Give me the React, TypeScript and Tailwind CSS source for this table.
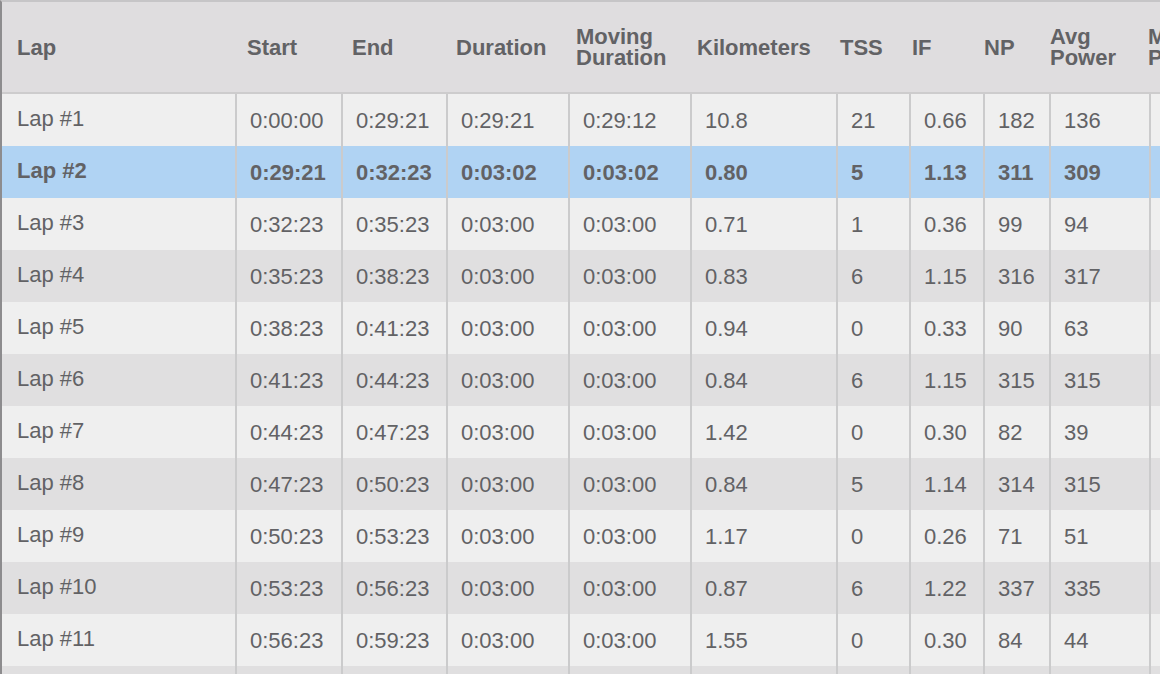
import React from "react";

const headers = [
  { label: "Lap", w: "w-[245px] pl-[15px]" },
  { label: "Start", w: "w-[105px]" },
  { label: "End", w: "w-[104px]" },
  { label: "Duration", w: "w-[120px]" },
  { label: "Moving Duration", w: "w-[121px]" },
  { label: "Kilometers", w: "w-[143px]" },
  { label: "TSS", w: "w-[72px]" },
  { label: "IF", w: "w-[72px]" },
  { label: "NP", w: "w-[66px]" },
  { label: "Avg Power", w: "w-[98px]" },
  { label: "Max Power", w: "w-[150px]" },
];

// widths of the body columns, first one has no left rule
const colW = [
  "w-[233px]",
  "w-[106px]",
  "w-[105px]",
  "w-[122px]",
  "w-[122px]",
  "w-[146px]",
  "w-[73px]",
  "w-[74px]",
  "w-[66px]",
  "w-[100px]",
  "w-[150px]",
];

const laps = [
  ["Lap #1", "0:00:00", "0:29:21", "0:29:21", "0:29:12", "10.8", "21", "0.66", "182", "136", ""],
  ["Lap #2", "0:29:21", "0:32:23", "0:03:02", "0:03:02", "0.80", "5", "1.13", "311", "309", ""],
  ["Lap #3", "0:32:23", "0:35:23", "0:03:00", "0:03:00", "0.71", "1", "0.36", "99", "94", ""],
  ["Lap #4", "0:35:23", "0:38:23", "0:03:00", "0:03:00", "0.83", "6", "1.15", "316", "317", ""],
  ["Lap #5", "0:38:23", "0:41:23", "0:03:00", "0:03:00", "0.94", "0", "0.33", "90", "63", ""],
  ["Lap #6", "0:41:23", "0:44:23", "0:03:00", "0:03:00", "0.84", "6", "1.15", "315", "315", ""],
  ["Lap #7", "0:44:23", "0:47:23", "0:03:00", "0:03:00", "1.42", "0", "0.30", "82", "39", ""],
  ["Lap #8", "0:47:23", "0:50:23", "0:03:00", "0:03:00", "0.84", "5", "1.14", "314", "315", ""],
  ["Lap #9", "0:50:23", "0:53:23", "0:03:00", "0:03:00", "1.17", "0", "0.26", "71", "51", ""],
  ["Lap #10", "0:53:23", "0:56:23", "0:03:00", "0:03:00", "0.87", "6", "1.22", "337", "335", ""],
  ["Lap #11", "0:56:23", "0:59:23", "0:03:00", "0:03:00", "1.55", "0", "0.30", "84", "44", ""],
  // next row only peeks in at the bottom edge, its text is below the fold
  ["", "", "", "", "", "", "", "", "", "", ""],
];

export default function App() {
  const selected = 1;

  return (
    <div
      className="w-[1160px] h-[674px] overflow-hidden bg-[#efefef] text-[#626265] text-[22px]"
      style={{ fontFamily: '"Liberation Sans", Arial, sans-serif' }}
    >
      <div className="border-t-2 border-t-[#c6c5c7] border-l-2 border-l-[#8d8c8e] h-full">
        {/* Header */}
        <div className="flex h-[92px] bg-[#dfdddf] border-b-2 border-b-[#cdcccd] font-bold leading-[21px] whitespace-nowrap">
          {headers.map((h) => (
            <div key={h.label} className={`${h.w} shrink-0 flex items-center`}>
              <span className="whitespace-pre-line">
                {h.label.includes(" ") ? h.label.replace(" ", "\n") : h.label}
              </span>
            </div>
          ))}
        </div>

        {/* Body */}
        {laps.map((row, i) => {
          const isSel = i === selected;
          const bg = isSel
            ? "bg-[#b0d3f3] font-bold"
            : i % 2 === 0
            ? "bg-[#efefef]"
            : "bg-[#e0dfe0]";
          return (
            <div key={i} className={`flex h-[52px] whitespace-nowrap ${bg}`}>
              {row.map((cell, j) => (
                <div
                  key={j}
                  className={
                    j === 0
                      ? `${colW[j]} shrink-0 pl-[15px] pb-[4px] flex items-center`
                      : `${colW[j]} shrink-0 pl-[13px] pt-[1px] flex items-center border-l-2 border-l-[#cbcbcc]`
                  }
                >
                  {cell}
                </div>
              ))}
            </div>
          );
        })}
      </div>
    </div>
  );
}
